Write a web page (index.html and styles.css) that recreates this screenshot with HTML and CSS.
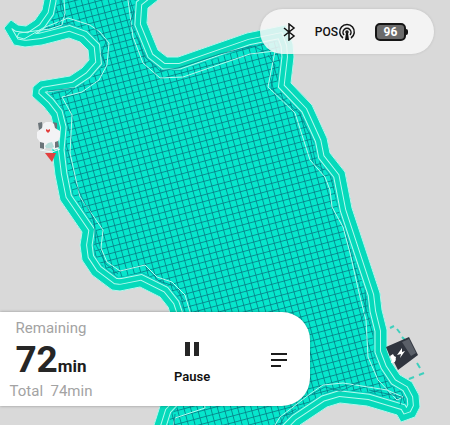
FILE: index.html
```html
<!DOCTYPE html>
<html lang="en">
<head>
  <meta charset="UTF-8" />
  <meta name="viewport" content="width=device-width, initial-scale=1.0"/>
  <title>Mowing map</title>
  <link rel="stylesheet" href="styles.css">
</head>
<body>
  <svg class="map" viewBox="0 0 450 425" preserveAspectRatio="xMinYMin slice" role="img" aria-label="Lawn map">
    <defs>
      <pattern id="grid" width="6.500" height="6.500" patternUnits="userSpaceOnUse" patternTransform="rotate(-15)">
        <rect width="7" height="7" class="lawn-fill"/>
        <path d="M0 .5H7M.5 0V7" class="grid-line"/>
      </pattern>
      <path id="lawn" d="M44 -30V0L42 10L35 20L26 26L18 25L11 20L4 28L14 45L25 47L42 45L69 38L80 42L88 50L89 60L82 68L70 76L40 81L33 87L32 96L44 107L51 116L54 128L52 150L55 175L60 200L82 232L80 245L82 260L92 275L112 290L120 291L140 287L160 297L168 307L174 325L185 350L180 385L160 406L154 425V455H270L300 425L327 407L340 403L367 406L387 412L397 415L401 422L415 417L420 407L419 395L412 382L400 375L392 363L387 350L387 330L382 310L380 293L352 208L345 172L330 153L327 138L312 105L291 83L294 57L293 44L286 25L247 33L178 57L167 57L158 50L147 23L148 8L158 0V-30Z"/>
      <clipPath id="lawn-clip"><use href="#lawn"/></clipPath>
    </defs>

    <!-- mowed area with its perimeter laps -->
    <g clip-path="url(#lawn-clip)">
      <use href="#lawn" fill="url(#grid)"/>
      <use href="#lawn" class="lap rough" stroke-width="28"/>
      <use href="#lawn" class="lap inner" stroke-width="27"/>
      <use href="#lawn" class="lap light" stroke-width="25"/>
      <use href="#lawn" class="lap band" stroke-width="23"/>
      <use href="#lawn" class="lap light" stroke-width="14"/>
      <use href="#lawn" class="lap band" stroke-width="12"/>
    </g>
    <use href="#lawn" class="lap edge" stroke-width="1"/>
    <path class="lap path" d="M64 0L65 13L62 25L50 29L19 33L17 37L24 39L43 28L68 18L90 25L100 32L109 43L107 65L99 80L82 92L62 97L72 115L70 153L76 180L80 197L103 230L101 248L107 262L120 271L145 265L157 277L172 282L185 295L190 312L196 345L205 408L175 418L172 430"/>
    <path class="lap path" d="M275 425L280 417L310 394L323 385L343 383L387 390L403 397L397 400L378 380L368 357L366 320L360 297L350 253L343 227L332 207L330 190L325 177L310 160L295 113L268 87L275 51L250 54L183 77L160 78L143 63L133 37L128 0"/>
    <path class="zigzag" d="M60 0L61 10L64 16L57 24M130 0L134 12L130 23L136 35L145 57L160 71L178 68L220 54L253 46L263 51M95 28L106 42L101 54L105 63M48 91L75 88L65 96M74 180L84 202L94 219L96 245L106 264L118 274M146 267L159 281L174 286L185 302M268 55L275 65L271 88L285 101L299 113L310 135L316 165L324 170M365 290L366 310L360 322M360 382L341 391L325 387L312 394M369 390L402 397L400 405M175 414L174 425M280 425L285 415L296 409"/>

    <!-- mower -->
    <g transform="translate(48 136)">
      <path d="M-10 -13L-6 -14L-5 -7L-9 -6ZM5 -14L9 -13L9 -7L6 -7Z" class="wheel"/>
      <path d="M-5 -12L-2 -14H3L6 -12L7 -8L12 -5V1L10 6V13L6 14L4 12H-2L-4 14L-8 12V6L-11 2V-4L-6 -8Z" class="mower"/>
      <path d="M-8 6L-4 7L-4 13L-8 12ZM7 6L10 5L11 11L7 12Z" class="wheel"/>
      <path d="M-3 10L0 7L4 6L6 11L4 12H-2Z" class="mower-deck"/>
      <path d="M0 -3L-2 -5L-2 -7L0 -6L2 -7L2 -5Z" class="marker"/>
      <path d="M-8 14L4 16L12 13" class="mower-bumper"/>
      <path d="M-3 17L8 17L4 26Z" class="marker"/>
    </g>

    <!-- charging dock -->
    <path class="dock-zone" d="M390 328L394 326M397 329L400 333M402 337L405 340M417 363L420 368M419 375L424 373M409 379L414 377"/>
    <path d="M386 347L409 337L418 355L398 370L394 362L396 360L393 355L390 357Z" class="dock"/>
    <path d="M402 342L409 339L416 353L411 356Z" class="dock-top"/>
    <path d="M390 356L393 354L394 356L396 357L395 362L391 363L392 360Z" class="dock-notch"/>
    <path d="M402 348L397 355L401 354L400 358L405 351L402 352Z" class="bolt"/>
  </svg>

  <main class="screen">
    <div class="status-pill">
      <svg class="bluetooth" viewBox="0 0 14 18" role="img" aria-label="Bluetooth">
        <path d="M2 5L12 13L7 17V1L12 5L2 13"/>
      </svg>
      <div class="pos">
        <span>POS</span>
        <svg class="signal" viewBox="0 0 18 18" aria-hidden="true">
          <path d="M5 15A7.300 7.300 0 1 1 13 15M6 12A4 4 0 1 1 12 12"/>
          <circle cx="9" cy="9" r="1"/>
          <path class="mast" d="M8 10H10L11 17H7Z"/>
        </svg>
      </div>
      <div class="battery"><span>96</span></div>
    </div>

    <section class="job-card">
      <div class="job-time">
        <span class="job-label">Remaining</span>
        <div class="job-left"><strong>72</strong><b>min</b></div>
        <span class="job-label">Total&nbsp; 74min</span>
      </div>
      <button type="button" class="pause-btn">
        <svg viewBox="0 0 14 16" aria-hidden="true"><path d="M0 1H5V15H0ZM9 1H14V15H9Z"/></svg>
        Pause
      </button>
      <button type="button" class="list-btn" aria-label="Task list">
        <svg viewBox="0 0 18 16" aria-hidden="true"><path d="M1 2H17M1 8H17M1 14H11"/></svg>
      </button>
    </section>
  </main>
</body>
</html>
```
FILE: styles.css
```css
html, body {
  margin: 0;
  padding: 0;
  height: 100%;
  background: #d9d9d9;
  font-family: Roboto, sans-serif;
  overflow: hidden;
}

/* Map */
.map {
  position: absolute;
  inset: 0;
  width: 100%;
  height: 100%;
}
.lawn-fill {
  fill: #06e6cc;
}
.grid-line {
  stroke: #067c86;
  stroke-width: 0.8;
}
.lap {
  fill: none;
}
.band {
  stroke: #06dabb;
}
.inner {
  stroke: #06dfc6;
}
.light {
  stroke: #b4f9ee;
}
.rough {
  stroke: #0a9c9f;
  stroke-dasharray: 7 5 15 9;
}
.edge {
  stroke: #b5f6ec;
}
.path {
  stroke: #b4f9ee;
  stroke-width: 1;
}
.zigzag {
  fill: none;
  stroke: #08808c;
  stroke-width: 0.8;
}
.mower {
  fill: #f3f3f5;
}
.mower-deck {
  fill: #b5dcd8;
}
.mower-bumper {
  fill: none;
  stroke: #eefafa;
  stroke-width: 1;
}
.wheel {
  fill: #6b7479;
}
.marker {
  fill: #e2403f;
}
.dock {
  fill: #30353f;
}
.dock-top {
  fill: #5a5f68;
}
.dock-notch, .bolt {
  fill: #fff;
}
.dock-zone {
  fill: none;
  stroke: #3fd0bd;
  stroke-width: 2;
}

/* Overlays */
.screen {
  position: relative;
  display: flex;
  flex-direction: column;
  justify-content: space-between;
  align-items: flex-start;
  box-sizing: border-box;
  min-height: 100%;
  padding: 9px 0 19px;
}
.status-pill {
  display: flex;
  align-items: center;
  align-self: flex-end;
  margin-right: 16px;
  padding: 0 28px 0 22px;
  height: 45px;
  border-radius: 23px;
  background: rgba(247, 247, 247, 0.86);
  box-shadow: 0 0 3px rgba(0, 0, 0, 0.12);
  color: #111;
}
.bluetooth {
  width: 14px;
  height: 18px;
  fill: none;
  stroke: #111;
  stroke-width: 1.5;
}
.pos {
  display: flex;
  align-items: center;
  margin: 0 19px;
  font-size: 12px;
  font-weight: 500;
}
.signal {
  width: 18px;
  height: 18px;
  fill: none;
  stroke: #111;
  stroke-width: 1.5;
}
.signal .mast {
  fill: #111;
  stroke: none;
}
.battery {
  position: relative;
  box-sizing: border-box;
  width: 31px;
  height: 18px;
  border: 2px solid #151515;
  border-radius: 5px;
  background: #6b6b6b;
  color: #fff;
  font-size: 12px;
  font-weight: 700;
  line-height: 14px;
  text-align: center;
}
.battery::after {
  content: "";
  position: absolute;
  right: -4px;
  top: 4px;
  width: 2px;
  height: 6px;
  border-radius: 0 2px 2px 0;
  background: #151515;
}

.job-card {
  display: flex;
  align-items: center;
  box-sizing: border-box;
  padding: 6px 22px 5px 11px;
  border-radius: 0 28px 28px 0;
  background: #fff;
  box-shadow: 0 0 3px rgba(0, 0, 0, 0.35);
}
.job-time {
  display: flex;
  flex-direction: column;
  align-items: center;
  width: 80px;
}
.job-label {
  color: #a3a3a3;
  font-size: 15px;
  line-height: 20px;
  white-space: nowrap;
}
.job-left {
  display: flex;
  align-items: baseline;
  height: 43px;
  color: #262626;
  line-height: 43px;
}
.job-left strong {
  font-size: 37px;
}
.job-left b {
  color: #1c1c1c;
  font-size: 17px;
}
button {
  padding: 0;
  border: 0;
  background: none;
  color: #111;
  font-family: inherit;
  cursor: pointer;
}
.pause-btn {
  display: flex;
  flex-direction: column;
  align-items: center;
  gap: 12px;
  margin-left: 83px;
  padding-top: 6px;
  font-size: 13px;
  font-weight: 600;
  line-height: 16px;
}
.pause-btn svg {
  width: 14px;
  height: 16px;
  fill: #262626;
}
.list-btn {
  margin-left: 60px;
}
.list-btn svg {
  display: block;
  width: 18px;
  height: 16px;
  fill: none;
  stroke: #1c1c1c;
  stroke-width: 2;
}
```
